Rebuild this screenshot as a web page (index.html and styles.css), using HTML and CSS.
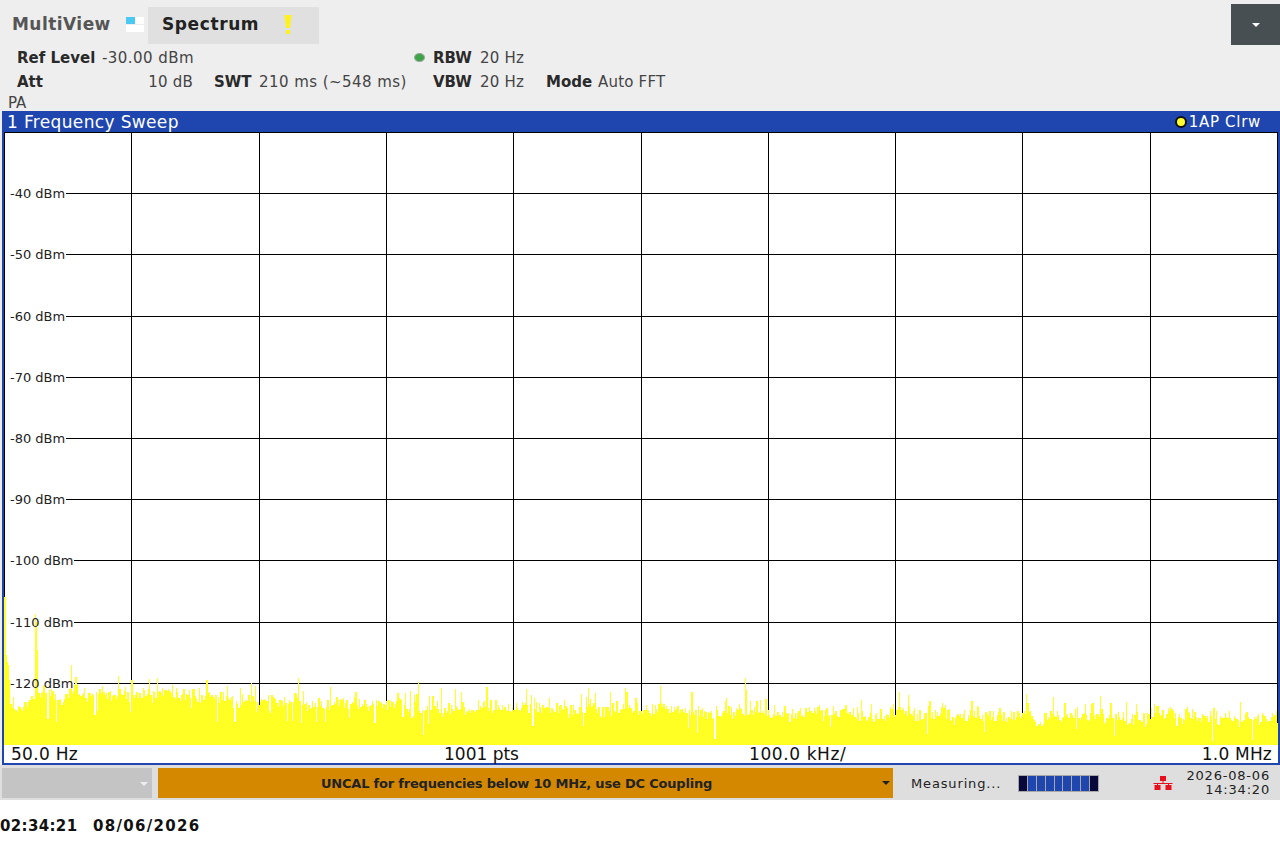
FILE: index.html
```html
<!DOCTYPE html>
<html lang="en">
<head>
    <meta charset="UTF-8">
    <title>Spectrum</title>
    <link rel="stylesheet" href="styles.css">
</head>
<body>
    <div class="instrument">
        <header class="top">
            <div class="tabs">
                <span class="multiview">MultiView</span>
                <span class="mv-icon"><i class="on"></i><i></i><i></i><i></i></span>
                <div class="tab">
                    <span class="tab-name">Spectrum</span>
                    <svg class="warn" width="8" height="19" viewBox="0 0 8 19">
                        <path d="M0.5 0H7.5L6 13H2Z" fill="#fff020"/>
                        <rect x="2" y="15" width="4" height="4" fill="#fff020"/>
                    </svg>
                </div>
                <button class="menu-button"><span class="arrow"></span></button>
            </div>
            <div class="settings">
                <b>Ref Level</b><span class="right wide">-30.00 dBm</span><span></span><b></b><span></span>
                <span class="led"></span><b>RBW</b><span>20 Hz</span><b></b><span></span>

                <b>Att</b><span class="right">10 dB</span><span></span><b>SWT</b><span class="wide">210 ms (~548 ms)</span>
                <span></span><b>VBW</b><span>20 Hz</span><b>Mode</b><span>Auto FFT</span>
            </div>
            <div class="pa">PA</div>
        </header>

        <section class="window">
            <div class="title-bar">
                <span>1 Frequency Sweep</span>
                <span class="trace-info"><span class="trace-dot"></span>1AP Clrw</span>
            </div>
            <div class="plot">
                <svg id="diagram" width="1274" height="613" viewBox="4 132 1274 613"></svg>
                <span class="level" style="top: 53px">-40 dBm</span>
                <span class="level" style="top: 114px">-50 dBm</span>
                <span class="level" style="top: 176px">-60 dBm</span>
                <span class="level" style="top: 237px">-70 dBm</span>
                <span class="level" style="top: 298px">-80 dBm</span>
                <span class="level" style="top: 359px">-90 dBm</span>
                <span class="level" style="top: 420px">-100 dBm</span>
                <span class="level" style="top: 482px">-110 dBm</span>
                <span class="level" style="top: 543px">-120 dBm</span>
            </div>
            <div class="axis">
                <span class="ax-start">50.0 Hz</span>
                <span class="ax-pts">1001 pts</span>
                <span class="ax-step">100.0 kHz/</span>
                <span class="ax-stop">1.0 MHz</span>
            </div>
        </section>

        <footer class="status">
            <div class="combo"><span class="combo-arrow"></span></div>
            <div class="message">
                <span>UNCAL for frequencies below 10 MHz, use DC Coupling</span>
                <span class="message-arrow"></span>
            </div>
            <div class="measuring">Measuring...</div>
            <div class="progress">
                <i class="dark"></i><i></i><i></i><i></i><i></i><i></i><i></i><i></i><i class="dark"></i>
            </div>
            <svg class="network" width="20" height="14" viewBox="0 0 20 14">
                <rect x="7" y="0" width="6" height="5" fill="#e8101c"/>
                <path d="M10 5V7M0.5 7.5H19.5M4.5 8V10M15.5 8V10" stroke="#e8101c" fill="none"/>
                <rect x="1.5" y="9" width="6" height="5" fill="#e8101c"/>
                <rect x="12.5" y="9" width="6" height="5" fill="#e8101c"/>
            </svg>
            <div class="clock">2026-08-06<br>14:34:20</div>
        </footer>
    </div>

    <div class="timestamp"><span class="ts-time">02:34:21</span><span class="ts-date">08/06/2026</span></div>

    <script src="trace.js"></script>
</body>
</html>
```

FILE: styles.css
```css
* {
    margin: 0;
    padding: 0;
    box-sizing: border-box;
}

body {
    font-family: "DejaVu Sans", sans-serif;
    background-color: #ffffff;
    color: #222;
    width: 1280px;
    height: 850px;
    overflow: hidden;
}

.instrument {
    height: 800px;
    background-color: #eeeeee;
}

/* top area */
.top {
    height: 111px;
}

.tabs {
    display: flex;
    align-items: flex-start;
    height: 45px;
    padding-left: 12px;
}

.multiview {
    margin-top: 14px;
    font-size: 17px;
    line-height: 21px;
    font-weight: bold;
    letter-spacing: 0.45px;
    color: #555;
    width: 114px;
}

.mv-icon {
    display: grid;
    grid-template-columns: 9px 9px;
    grid-template-rows: 7px 7px;
    gap: 1px 0;
    margin-top: 17px;
    width: 22px;
}

.mv-icon i {
    background-color: #ffffff;
}

.mv-icon i.on {
    background-color: #4cc8f4;
}

.tab {
    display: flex;
    align-items: center;
    width: 171px;
    height: 37px;
    margin-top: 7px;
    padding: 0 0 3px 14px;
    background-color: #e0e0e0;
}

.tab-name {
    width: 122px;
    font-size: 17px;
    font-weight: bold;
    letter-spacing: 0.6px;
}

.warn {
    display: block;
}

.menu-button {
    margin-left: auto;
    margin-top: 4px;
    width: 49px;
    height: 41px;
    border: none;
    background-color: #484f52;
    display: flex;
    align-items: center;
    justify-content: center;
}

.arrow {
    border-left: 4px solid transparent;
    border-right: 4px solid transparent;
    border-top: 4px solid #ffffff;
}

.settings {
    display: grid;
    grid-template-columns: 85px 91px 21px 45px 155px 19px 47px 66px 52px 100px;
    grid-auto-rows: 24px;
    padding-left: 17px;
    margin-top: 1px;
    font-size: 15px;
    line-height: 24px;
    letter-spacing: 0.2px;
    white-space: nowrap;
    color: #444;
}

.settings b {
    color: #2a2a2a;
    letter-spacing: 0;
}

.settings .right {
    text-align: right;
}

.settings .wide {
    letter-spacing: 0.45px;
}

.led {
    width: 11px;
    height: 9px;
    margin-top: 7px;
    border-radius: 50%;
    background-color: #3fa34a;
    border: 1px solid #9aa89a;
}

.pa {
    margin: 1px 0 0 8px;
    font-size: 15px;
    line-height: 17px;
    color: #444;
}

/* measurement window */
.window {
    position: relative;
    height: 654px;
    margin: 0 0 0 2px;
    width: 1278px;
    background-color: #ffffff;
    border: solid #1e46ae;
    border-width: 0 2px 2px 2px;
}

.title-bar {
    display: flex;
    justify-content: space-between;
    height: 21px;
    margin: 0 -2px;
    padding: 1px 19px 0 6px;
    background-color: #1e46ae;
    color: #ffffff;
    font-size: 17px;
    line-height: 21px;
    letter-spacing: 0.35px;
}

.title-bar > span:first-child {
    margin-left: -1px;
}

.trace-info {
    display: flex;
    align-items: center;
    font-size: 15px;
    letter-spacing: 0.7px;
}

.trace-dot {
    width: 12px;
    height: 12px;
    margin-right: 2px;
    border-radius: 50%;
    background-color: #ffff30;
    border: 2px solid #111;
}

.plot {
    position: relative;
    height: 613px;
}

#diagram {
    display: block;
}

.level {
    position: absolute;
    left: 6px;
    font-size: 13px;
    line-height: 17px;
    color: #222;
}

.axis {
    position: relative;
    height: 18px;
    font-size: 17px;
    line-height: 18px;
    color: #111;
}

.axis span {
    position: absolute;
    top: 0;
}

.ax-start { left: 7px; letter-spacing: 0.3px; }
.ax-pts { left: 440px; }
.ax-step { left: 745px; letter-spacing: 0.6px; }
.ax-stop { right: 6px; letter-spacing: 0.2px; }

/* status line */
.status {
    display: flex;
    align-items: center;
    height: 35px;
    padding: 3px 0 2px 2px;
    background-color: #dedede;
}

.combo {
    position: relative;
    width: 150px;
    height: 30px;
    background-color: #c4c4c4;
}

.combo-arrow {
    position: absolute;
    right: 4px;
    top: 14px;
    border-left: 4px solid transparent;
    border-right: 4px solid transparent;
    border-top: 4px solid #eeeeee;
}

.message {
    display: flex;
    align-items: center;
    justify-content: center;
    position: relative;
    width: 735px;
    height: 30px;
    margin-left: 6px;
    padding-right: 18px;
    background-color: #d48800;
    font-size: 13px;
    font-weight: bold;
    letter-spacing: -0.2px;
    color: #222;
}

.message-arrow {
    position: absolute;
    right: 3px;
    top: 13px;
    border-left: 4px solid transparent;
    border-right: 4px solid transparent;
    border-top: 4px solid #222;
}

.measuring {
    width: 107px;
    margin-left: 18px;
    font-size: 13px;
    letter-spacing: 0.85px;
    color: #222;
}

.progress {
    display: flex;
    gap: 1px;
    width: 81px;
    height: 17px;
    padding: 1px;
    background-color: #a8a8a8;
}

.progress i {
    flex: 1;
    background-color: #1e46ae;
}

.progress i.dark {
    background-color: #08083a;
}

.network {
    margin-left: 54px;
}

.clock {
    margin-left: 13px;
    width: 84px;
    font-size: 13px;
    line-height: 14px;
    text-align: right;
    letter-spacing: 0.8px;
    color: #222;
}

.timestamp {
    display: flex;
    padding-top: 17px;
    font-size: 15px;
    line-height: 18px;
    font-weight: bold;
    color: #111;
}

.ts-time {
    width: 93px;
    letter-spacing: 0.35px;
}

.ts-date {
    letter-spacing: 1.3px;
}
```

FILE: trace.js
```js
// Draws the grid and the noise trace into the diagram
var svg = document.getElementById('diagram');
var NS = 'http://www.w3.org/2000/svg';

function line(x1, y1, x2, y2, color) {
    var l = document.createElementNS(NS, 'line');
    l.setAttribute('x1', x1);
    l.setAttribute('y1', y1);
    l.setAttribute('x2', x2);
    l.setAttribute('y2', y2);
    l.setAttribute('stroke', color);
    svg.appendChild(l);
}

// horizontal lines start where the level label ends
var rows = [[193, 66], [254, 66], [316, 66], [377, 66], [438, 66], [499, 66], [560, 74], [622, 74], [683, 74]];
var cols = [131, 259, 386, 513, 641, 768, 895, 1022, 1150];

line(4, 132.5, 1278, 132.5, '#000');
line(4.5, 132, 4.5, 745, '#000');
line(1277.5, 132, 1277.5, 745, '#000');
rows.forEach(function (r) { line(r[1], r[0] + 0.5, 1278, r[0] + 0.5, '#000'); });
cols.forEach(function (x) { line(x + 0.5, 132, x + 0.5, 745, '#000'); });

// small seeded generator so every run gives the same trace
var seed = 12345;
function rnd() {
    seed = (seed * 16807) % 2147483647;
    return seed / 2147483647;
}

function lerp(x, pts) {
    for (var i = 1; i < pts.length; i++) {
        if (x <= pts[i][0]) {
            var t = (x - pts[i - 1][0]) / (pts[i][0] - pts[i - 1][0]);
            return pts[i - 1][1] + t * (pts[i][1] - pts[i - 1][1]);
        }
    }
    return pts[pts.length - 1][1];
}

// typical height of the noise floor along the sweep
var floor = [[4, 703], [12, 710], [40, 695], [150, 694], [300, 702], [500, 708], [750, 712], [1000, 716], [1278, 717]];
var peaks = {
    4: 597, 5: 597, 6: 655, 7: 662, 8: 665, 9: 680,
    35: 614, 36: 622, 37: 650, 71: 665, 118: 676, 298: 678, 418: 682, 588: 688, 745: 678, 746: 690
};

// one point of the 1001 every 1.27 px, the level drifts a little between points
var d = 'M4 745';
var drift = 0;
for (var i = 0; i < 1001; i++) {
    var x0 = Math.round(4 + i * 1.273);
    var x1 = Math.round(4 + (i + 1) * 1.273);
    var r = rnd();
    drift = drift * 0.6 + (rnd() - 0.5) * 7;
    var y = lerp(x0, floor) + drift + (rnd() - 0.5) * 11;
    if (r > 0.86) y -= 4 + rnd() * 13;
    if (r < 0.05) y += 5 + rnd() * 18;
    for (var x = x0; x < x1; x++) {
        d += 'H' + x + 'V' + Math.round(peaks[x] || y) + 'H' + (x + 1);
    }
}
d += 'V745Z';

var trace = document.createElementNS(NS, 'path');
trace.setAttribute('d', d);
trace.setAttribute('fill', '#ffff24');
trace.setAttribute('shape-rendering', 'crispEdges');
svg.appendChild(trace);
```
